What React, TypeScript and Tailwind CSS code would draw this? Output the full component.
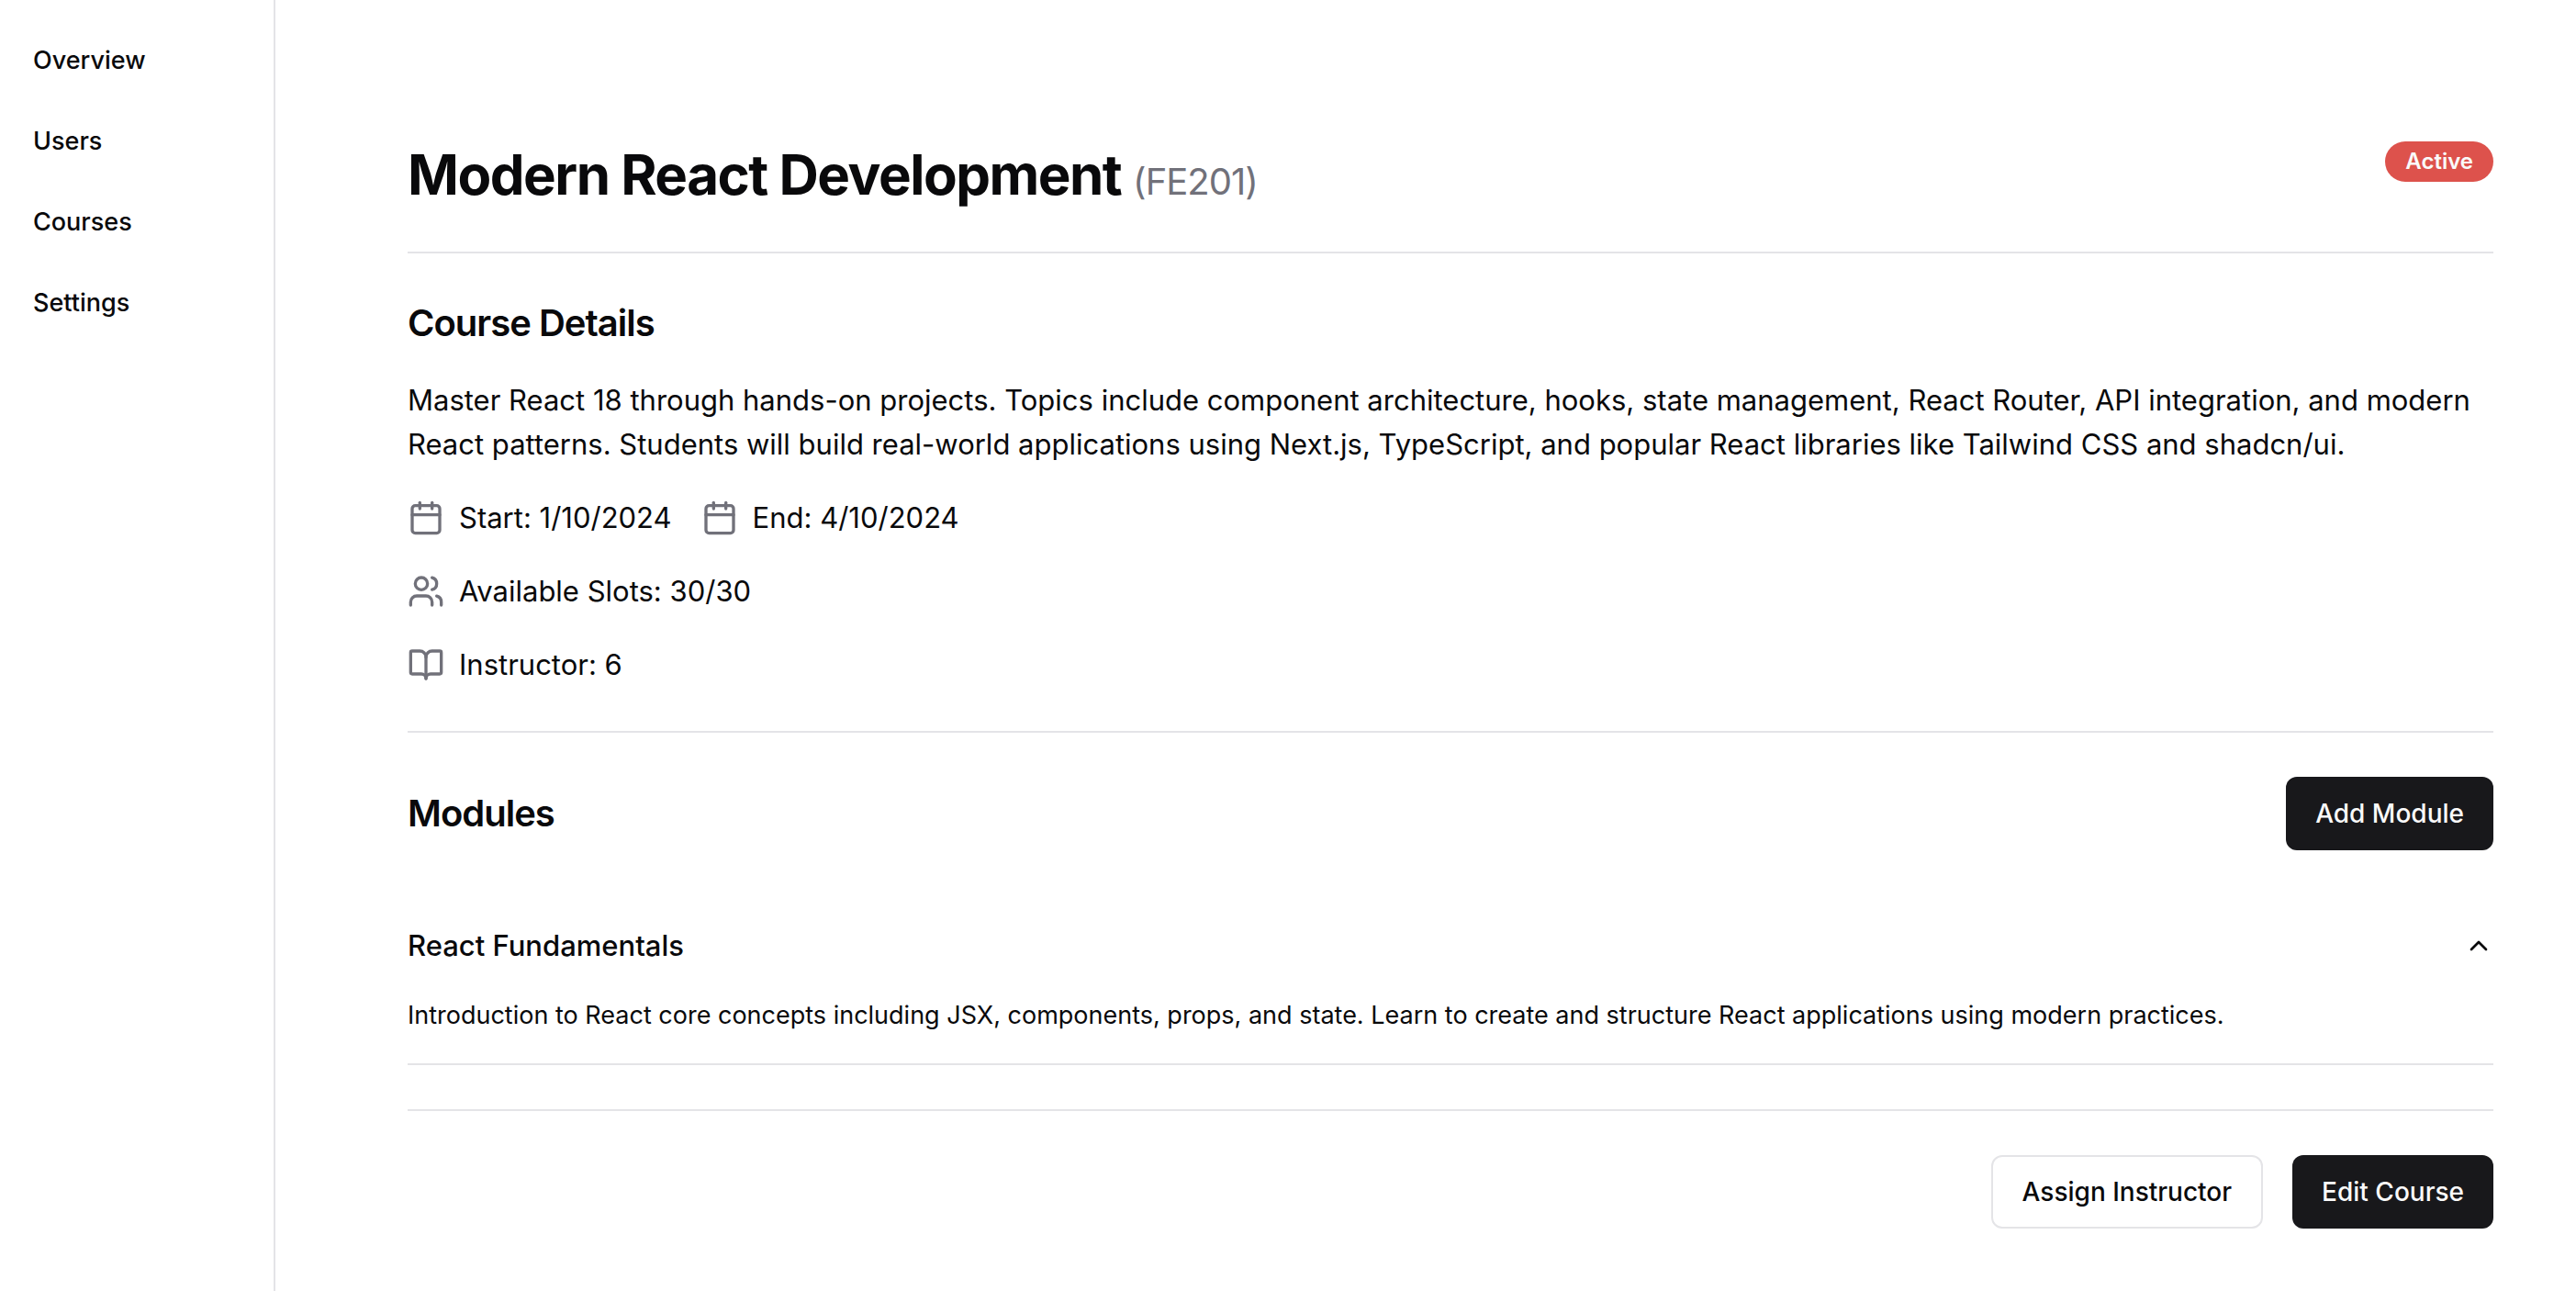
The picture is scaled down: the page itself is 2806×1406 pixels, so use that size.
import React from "react";
import { Calendar, Users, BookOpen, ChevronUp } from "lucide-react";
import type { LucideIcon } from "lucide-react";

const navItems = ["Overview", "Users", "Courses", "Settings"];

function Separator() {
  return <hr className="h-[2px] border-0 bg-[#e4e4e7]" />;
}

function Detail({ icon: Icon, children }: { icon: LucideIcon; children: React.ReactNode }) {
  return (
    <div className="flex items-center gap-4 text-[31px] leading-12">
      <Icon size={40} className="shrink-0 text-[#71717a]" />
      <span>{children}</span>
    </div>
  );
}

function Button({ outline, children }: { outline?: boolean; children: React.ReactNode }) {
  return (
    <button
      type="button"
      className={
        outline
          ? "h-20 rounded-xl border-2 border-[#e4e4e7] bg-white px-8 text-[28px] font-medium"
          : "h-20 rounded-xl bg-[#18181b] px-8 text-[28px] font-medium text-[#fafafa]"
      }
    >
      {children}
    </button>
  );
}

export default function App() {
  const [open, setOpen] = React.useState(true);
  return (
    <div className="flex min-h-screen bg-white font-['Inter',sans-serif] text-[#09090b]">
      <nav className="w-[300px] shrink-0 border-r-2 border-[#e4e4e7] px-9 pt-[46px]">
        <ul className="flex flex-col gap-12">
          {navItems.map((item) => (
            <li key={item}>
              <a href="#" className="block text-[27px] leading-10 font-medium">
                {item}
              </a>
            </li>
          ))}
        </ul>
      </nav>
      <main className="min-w-0 flex-1 pt-[154px] pr-[90px] pl-36">
        <header className="flex items-start justify-between pb-12">
          <h1 className="text-[60px] leading-[72px] font-bold tracking-tight">
            Modern React Development{" "}
            <span className="text-[40px] leading-none font-normal tracking-tight text-[#71717a]">(FE201)</span>
          </h1>
          <span className="rounded-full bg-[#dd524c] px-[22px] py-1 text-[24px] leading-9 font-semibold text-[#fafafa]">
            Active
          </span>
        </header>
        <Separator />
        <section className="flex flex-col gap-8 py-12">
          <h2 className="text-[40px] leading-[56px] font-semibold tracking-tight">Course Details</h2>
          <p className="text-[31px] leading-12">
            Master React 18 through hands-on projects. Topics include component architecture, hooks, state
            management, React Router, API integration, and modern React patterns. Students will build real-world
            applications using Next.js, TypeScript, and popular React libraries like Tailwind CSS and shadcn/ui.
          </p>
          <div className="flex gap-8">
            <Detail icon={Calendar}>Start: 1/10/2024</Detail>
            <Detail icon={Calendar}>End: 4/10/2024</Detail>
          </div>
          <Detail icon={Users}>Available Slots: 30/30</Detail>
          <Detail icon={BookOpen}>Instructor: 6</Detail>
        </section>
        <Separator />
        <section className="py-12">
          <div className="flex items-center justify-between">
            <h2 className="text-[40px] leading-[56px] font-semibold tracking-tight">Modules</h2>
            <Button>Add Module</Button>
          </div>
          <h3 className="mt-16">
            <button
              type="button"
              aria-expanded={open}
              onClick={() => setOpen(!open)}
              className="flex w-full items-center justify-between py-4 text-[31px] leading-12 font-medium"
            >
              React Fundamentals
              <ChevronUp size={32} className={open ? "" : "rotate-180"} />
            </button>
          </h3>
          {open && (
            <p className="pt-4 pb-8 text-[27px] leading-10">
              Introduction to React core concepts including JSX, components, props, and state. Learn to create and
              structure React applications using modern practices.
            </p>
          )}
          <Separator />
        </section>
        <Separator />
        <footer className="flex justify-end gap-8 py-12">
          <Button outline>Assign Instructor</Button>
          <Button>Edit Course</Button>
        </footer>
      </main>
    </div>
  );
}
